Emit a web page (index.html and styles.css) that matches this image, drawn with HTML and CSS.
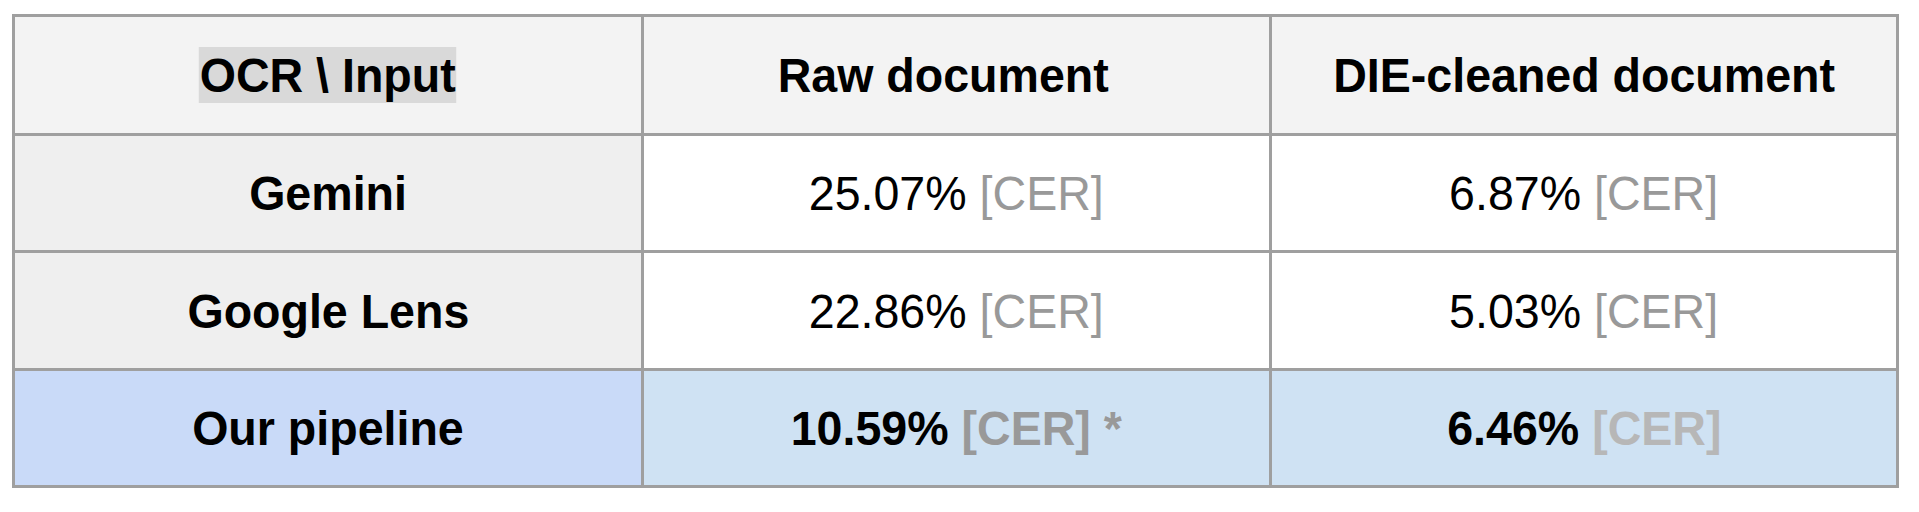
FILE: index.html
```html
<!DOCTYPE html>
<html>
<head>
<meta charset="utf-8">
<link rel="stylesheet" href="styles.css">
</head>
<body>
<div class="grid">
  <div class="cell head"><span class="t hl">OCR \ Input</span></div>
  <div class="cell head shift"><span class="t b">Raw document</span></div>
  <div class="cell head"><span class="t b">DIE-cleaned document</span></div>

  <div class="cell rowhead"><span class="t b">Gemini</span></div>
  <div class="cell"><span class="t">25.07% <span class="g">[CER]</span></span></div>
  <div class="cell"><span class="t">6.87% <span class="g">[CER]</span></span></div>

  <div class="cell rowhead"><span class="t b">Google Lens</span></div>
  <div class="cell"><span class="t">22.86% <span class="g">[CER]</span></span></div>
  <div class="cell"><span class="t">5.03% <span class="g">[CER]</span></span></div>

  <div class="cell ours-head"><span class="t b">Our pipeline</span></div>
  <div class="cell ours"><span class="t b">10.59% <span class="g">[CER] *</span></span></div>
  <div class="cell ours"><span class="t b">6.46% <span class="g2">[CER]</span></span></div>
</div>
</body>
</html>
```

FILE: styles.css
```css
html, body {
  margin: 0;
  padding: 0;
  background: #ffffff;
}
body {
  padding: 14px 0 0 12px;
  font-family: "Liberation Sans", Arial, sans-serif;
}
.grid {
  display: grid;
  grid-template-columns: 629px 628px 627px;
  grid-template-rows: 119px 117px 118px 117px;
  width: 1884px;
  border-top: 3px solid #9f9f9f;
  border-left: 3px solid #9f9f9f;
}
.cell {
  border-right: 3px solid #9f9f9f;
  border-bottom: 3px solid #9f9f9f;
  display: flex;
  align-items: center;
  justify-content: center;
  background: #ffffff;
  color: #000000;
}
.shift { padding-right: 26px; }
.head { background: #f3f3f3; }
.rowhead { background: #efefef; }
.ours-head { background: #c9daf8; }
.ours { background: #cfe2f3; }
.t {
  display: inline-block;
  font-size: 49px;
  line-height: normal;
  white-space: nowrap;
  transform: scaleX(0.95);
}
.b { font-weight: bold; }
.hl {
  font-weight: bold;
  background: #d9d9d9;
  padding: 0 1px;
}
.g { color: #999999; }
.g2 { color: #b7b7b7; }
```
